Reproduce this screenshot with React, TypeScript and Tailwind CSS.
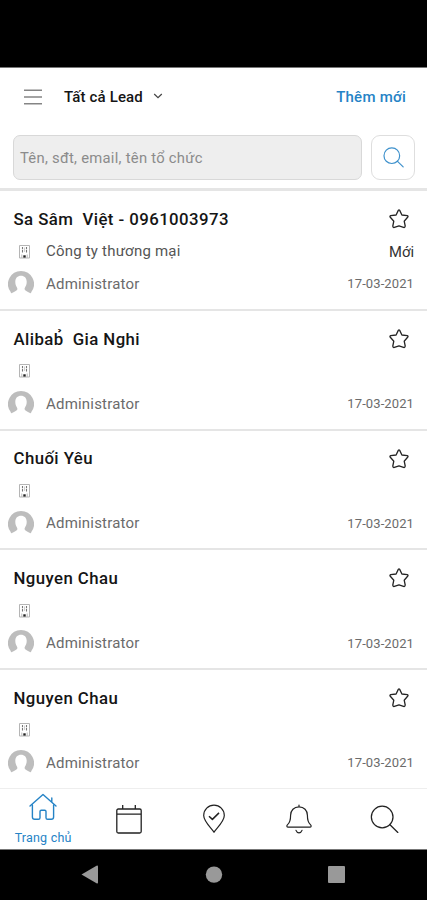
import React from 'react';

type Lead = { name: string; rest?: string; company?: string; status?: string };

const leads: Lead[] = [
  { name: 'Sa Sâm\u00a0 Việt - 0961003973', company: 'Công ty thương mại', status: 'Mới' },
  { name: 'Alibab\u0309', rest: 'Gia Nghi' },
  { name: 'Chuối Yêu' },
  { name: 'Nguyen Chau' },
  { name: 'Nguyen Chau' },
];

function SearchIcon({ className }: { className: string }) {
  return (
    <svg viewBox="0 0 30 30" className={className} fill="none" stroke="currentColor">
      <circle cx="12.6" cy="12.4" r="11.2" />
      <path d="M20.4 20.2 28.8 28.4" strokeLinecap="round" />
    </svg>
  );
}

function Star() {
  return (
    <svg viewBox="0 0 20 20" className="h-5 w-5 text-[#252525]" fill="none" stroke="currentColor" strokeWidth="1.3" strokeLinejoin="round">
      <path d="M9.3 1.4Q10 .4 10.7 1.4L12.9 6 18.3 6.6Q19.6 7.2 18.6 8.3L15.2 12.2 16.2 17Q16 18.9 14.5 18.4L10 16.8 5.4 18.4Q3.9 18.9 3.8 17L4.8 12.2 1.3 8.3Q.4 7.2 1.7 6.6L7.1 6Z" />
    </svg>
  );
}

function Building() {
  return (
    <svg viewBox="0 0 13 15" className="h-[15px] w-[13px]" fill="none">
      <path d="M1.5 14V1.5h10V14Z" stroke="#b5b5b5" strokeWidth="1" />
      <path d="M4.5 3v5.5M8.5 3v5.5" stroke="#777" strokeWidth="1.1" strokeDasharray="2.3 .8" />
      <path d="M6.5 3.5v4.5" stroke="#c4c4c4" strokeWidth=".8" />
      <path d="M3.8 10.5v3.3M9.2 10.5v3.3" stroke="#aaa" strokeWidth=".8" />
      <path d="M5.3 13.6v-2.3h2.4v2.3Z" fill="#222" />
    </svg>
  );
}

function Avatar() {
  return (
    <svg viewBox="0 0 26 26" className="h-[26px] w-[26px]">
      <path d="M13 0A13 13 0 0 0 2.4 20.5Q3 22.8 4.2 22C5.6 20.6 9.3 19.8 9.4 17.9 9.4 16.3 7.3 15 7.3 10.8 7.3 7 9.6 4.8 13 4.8s5.7 2.2 5.7 6c0 4.2-2.1 5.5-2.1 7.1.1 1.9 3.8 2.7 5.2 4.1q1.2.8 1.8-1.5A13 13 0 0 0 13 0Z" fill="#bdbdbd" />
    </svg>
  );
}

function LeadRow({ lead }: { lead: Lead }) {
  return (
    <li className="h-[119.7px] shrink-0 border-b-2 border-[#e5e5e5] pt-3">
      <div className="flex h-8 items-center justify-between pl-[13.5px] pr-[18px]">
        <h2 className="flex whitespace-pre pt-[1px] text-[16.8px] font-medium tracking-[0.43px] text-[#151515]">
          {lead.name}
          {lead.rest && <span className="ml-[9px]">{lead.rest}</span>}
        </h2>
        <Star />
      </div>
      <div className="flex h-8 items-center pl-[18px] pr-[13px] text-[15px] text-[#555]">
        <Building />
        <span className="ml-[15px] flex-1 pt-px tracking-[0.2px]">{lead.company}</span>
        <span className="pt-px text-[14.8px] text-[#333]">{lead.status}</span>
      </div>
      <div className="flex h-[34px] items-center pl-2 pr-[13px] text-[#6b6b6b]">
        <Avatar />
        <span className="ml-3 flex-1 text-[15px] tracking-[0.2px]">Administrator</span>
        <time className="text-[13px] tracking-[0.1px]">17-03-2021</time>
      </div>
    </li>
  );
}

export default function App() {
  return (
    <div className="flex h-[900px] w-[427px] flex-col overflow-hidden bg-white font-[Roboto,'Noto_Sans',sans-serif]">
      <div className="h-[68px] shrink-0 border-b border-[#777] bg-black" />
      <header className="h-[123px] shrink-0 border-b-[3px] border-[#e5e5e5]">
        <div className="flex h-[59px] items-center pl-6 pr-[21px]">
          <svg viewBox="0 0 18 16" className="mb-px h-4 w-[18px]" stroke="#858585" strokeWidth="1.6">
            <path d="M0 1.3h18M0 8h18M0 14.7h18" />
          </svg>
          <span className="ml-[22px] text-[15px] font-medium tracking-[0.15px] text-[#151515]">Tất cả Lead</span>
          <svg viewBox="0 0 10 6" className="mb-[3px] ml-[10px] h-[6px] w-[10px]" fill="none" stroke="#444" strokeWidth="1.2">
            <path d="m1.2 1 3.8 3.7L8.8 1" />
          </svg>
          <button className="ml-auto text-[15px] font-medium tracking-[0.25px] text-[#2583c6]">Thêm mới</button>
        </div>
        <div className="flex items-center gap-[9px] pl-[13px] pr-3 pt-2">
          <div className="flex h-[45px] flex-1 items-center rounded-[7px] border border-[#d8d8d8] bg-[#eee] pl-[6px] pt-px text-[14.8px] tracking-[0.26px] text-[#8b8b8b]">
            Tên, sđt, email, tên tổ chức
          </div>
          <button className="flex h-[45px] w-11 items-center justify-center rounded-[9px] border border-[#dedede] bg-white">
            <SearchIcon className="h-[21px] w-[21px] stroke-[1.7px] text-[#3e91cc]" />
          </button>
        </div>
      </header>
      <ul className="h-[597px] shrink-0 overflow-hidden pt-[0.2px]">
        {leads.map((lead, i) => <LeadRow key={i} lead={lead} />)}
      </ul>
      <nav className="grid h-[61px] shrink-0 grid-cols-5 border-t border-[#eee] bg-white pl-px text-[#222]">
        <div className="-ml-px flex flex-col items-center pt-[4px] text-[#2583c6]">
          <svg viewBox="0 0 28 28" className="h-7 w-7" fill="none" stroke="currentColor" strokeWidth="1.4" strokeLinejoin="round" strokeLinecap="round">
            <path d="M1 13 14 1.4 27 13M22.8 8.8V5" />
            <path d="M3.4 12v12q0 2.3 2.3 2.3h3.7q1.6 0 1.6-1.6v-6.2q0-1.3 1.3-1.3h3.4q1.3 0 1.3 1.3v6.2q0 1.6 1.6 1.6h3.7q2.3 0 2.3-2.3V12" />
          </svg>
          <span className="mt-[9px] text-[12.5px] leading-4 tracking-[0.2px]">Trang chủ</span>
        </div>
        <div className="flex items-center justify-center">
          <svg viewBox="0 0 26 30" className="h-[30px] w-[26px]" fill="none" stroke="currentColor" strokeWidth="1.3">
            <rect x=".8" y="5" width="24.4" height="24" rx="1.5" />
            <path d="M1 10.2h24M6.7 1v4M19.3 1v4" />
          </svg>
        </div>
        <div className="flex items-center justify-center">
          <svg viewBox="0 0 24 30" className="h-[30px] w-6" fill="none" stroke="currentColor" strokeWidth="1.2" strokeLinejoin="round">
            <path d="M12 28.3C10.5 25.3 1.7 17.7 1.7 11.5a10.3 10.4 0 0 1 20.6 0C22.3 17.7 13.5 25.3 12 28.3Z" />
            <path d="m7 12.2 3.4 3.2L17 8.9" strokeWidth="1.5" />
          </svg>
        </div>
        <div className="flex items-center justify-center">
          <svg viewBox="0 0 26 30" className="h-[30px] w-[26px]" fill="none" stroke="currentColor" strokeWidth="1.2" strokeLinejoin="round" strokeLinecap="round">
            <path d="M13 1v1.8M13 2.8c-5 0-8.4 3.6-8.4 8.5 0 5.4-.7 7.4-3 9.3-1.2 1.1-.9 2.5.6 2.5h21.6c1.5 0 1.8-1.4.6-2.5-2.3-1.9-3-3.9-3-9.3 0-4.9-3.4-8.5-8.4-8.5ZM10 26.4q.8 2.4 3 2.4t3-2.4" />
          </svg>
        </div>
        <div className="flex items-center justify-center">
          <SearchIcon className="h-[29px] w-[29px] stroke-[1.3px]" />
        </div>
      </nav>
      <footer className="h-[51px] shrink-0 border-t border-[#777] bg-black">
        <svg viewBox="0 0 427 50" className="h-[50px] w-full" fill="#999">
          <path d="M81.5 24.5 96.5 15.7Q98 15 98 16.5v16q0 1.6-1.5.8Z" />
          <circle cx="214" cy="24.6" r="8.2" />
          <rect x="328" y="16" width="17" height="17" rx="1" />
        </svg>
      </footer>
    </div>
  );
}
